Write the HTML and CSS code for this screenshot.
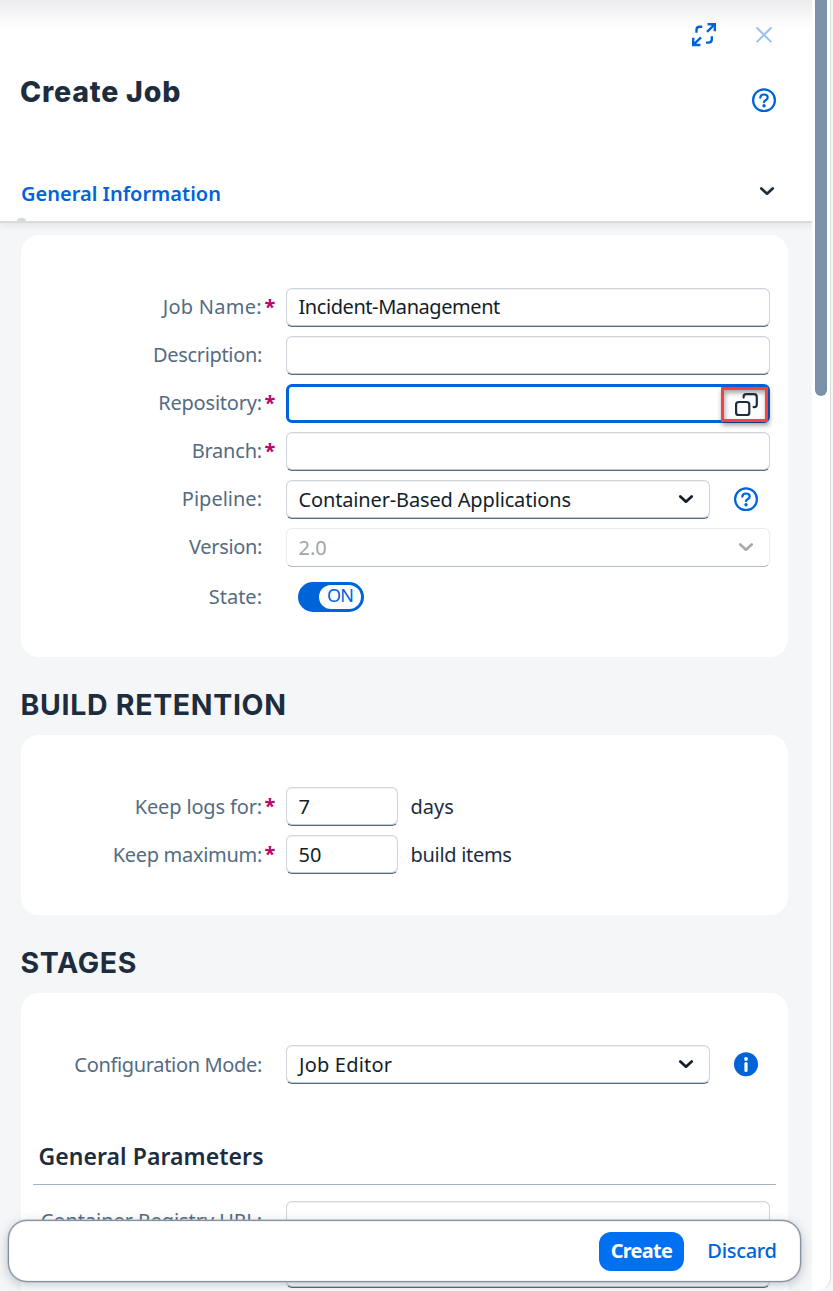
FILE: index.html
```html
<!DOCTYPE html>
<html lang="en">
<head>
<meta charset="utf-8">
<title>Create Job</title>
<link rel="stylesheet" href="styles.css">
</head>
<body>
<svg class="defs" width="0" height="0">
  <symbol id="chevron" viewBox="0 0 16 10"><path d="M2.300 2.400 8 7.700l5.700-5.300" fill="none" stroke="currentColor" stroke-width="2.700" stroke-linecap="round" stroke-linejoin="round"/></symbol>
  <symbol id="help" viewBox="0 0 24 24"><circle cx="12" cy="12.300" r="10.900" fill="none" stroke="currentColor" stroke-width="2.200"/><path d="M8.300 9.600C8.500 7.500 10 6.500 12 6.500c2.200 0 3.700 1.300 3.700 3.100 0 2.700-3.500 2.400-3.700 4.500" fill="none" stroke="currentColor" stroke-width="2.200" stroke-linecap="round"/><circle cx="12" cy="17.700" r="1.700" fill="currentColor"/></symbol>
</svg>
<div class="window">
  <main class="panel">
    <header class="head">
      <div class="tools">
        <svg class="expand" width="26" height="26" viewBox="0 0 26 26" fill="none" stroke="currentColor" stroke-width="2.400"><path d="M16.600 2.200h7.200v7M23.500 2.500 16 9.800M2.200 15.800v7.200h7.200M2.500 22.700 10 15.400"/><path d="M11.200 4.800H8.700Q5.500 4.800 5.500 7.800v3M15 20.600h2.600q3.200 0 3.200-3v-3.300" stroke-linejoin="round"/></svg>
        <svg class="close" width="16" height="16" viewBox="0 0 16 16"><path d="M1.200 1 14.800 14.600M14.800 1 1.200 14.600" stroke="currentColor" stroke-width="2" stroke-linecap="round"/></svg>
      </div>
      <div class="title-row">
        <h1 class="title">Create Job</h1>
        <svg class="help" width="24" height="24"><use href="#help"/></svg>
      </div>
      <div class="nav-row">
        <span class="tab">General Information</span>
        <svg class="chev" width="16" height="10"><use href="#chevron"/></svg>
      </div>
      <i class="tab-mark"></i>
    </header>
    <section class="card card-general">
      <div class="row"><label class="label l-job">Job Name:</label><b class="req">*</b><div class="field v-job">Incident-Management</div></div>
      <div class="row"><label class="label l-desc">Description:</label><b class="req"></b><div class="field"></div></div>
      <div class="row"><label class="label l-repo">Repository:</label><b class="req">*</b><div class="field focus">
        <span class="mark"><svg width="23" height="23" viewBox="0 0 23 23" fill="none" stroke="currentColor" stroke-width="2.200"><rect x="1.100" y="9" width="13.200" height="13" rx="2.600"/><path d="M8.600 4.600V3.800Q8.600 1.200 11.200 1.200H19Q21.800 1.200 21.800 4v7.500q0 2.600-2.600 2.600h-.6" stroke-linecap="round"/></svg></span>
      </div></div>
      <div class="row"><label class="label l-repo">Branch:</label><b class="req">*</b><div class="field"></div></div>
      <div class="row"><label class="label">Pipeline:</label><b class="req"></b><div class="field select mid v-pipe">Container-Based Applications<svg class="chev" width="16" height="10"><use href="#chevron"/></svg></div><svg class="side" width="24" height="24"><use href="#help"/></svg></div>
      <div class="row"><label class="label l-desc">Version:</label><b class="req"></b><div class="field select disabled">2.0<svg class="chev" width="16" height="10"><use href="#chevron"/></svg></div></div>
      <div class="row state"><label class="label">State:</label><b class="req"></b><div class="switch"><span class="knob">ON</span></div></div>
    </section>
    <h2 class="section h-build">BUILD RETENTION</h2>
    <section class="card card-build">
      <div class="row"><label class="label l-logs">Keep logs for:</label><b class="req">*</b><div class="field small">7</div><span class="unit">days</span></div>
      <div class="row"><label class="label l-max">Keep maximum:</label><b class="req">*</b><div class="field small">50</div><span class="unit u-items">build items</span></div>
    </section>
    <h2 class="section h-stages">STAGES</h2>
    <section class="card card-stages">
      <div class="row"><label class="label l-desc">Configuration Mode:</label><b class="req"></b><div class="field select mid v-editor">Job Editor<svg class="chev" width="16" height="10"><use href="#chevron"/></svg></div>
        <svg class="side" width="24" height="24" viewBox="0 0 24 24"><circle cx="12" cy="12.300" r="12" fill="currentColor"/><circle cx="12" cy="7" r="1.900" fill="#fff"/><path d="M12 11.600v6.800" stroke="#fff" stroke-width="3.200" stroke-linecap="round"/></svg></div>
      <h3 class="subhead">General Parameters</h3>
      <div class="row"><label class="label l-url">Container Registry URL:</label><b class="req"></b><div class="field"></div></div>
      <div class="row"><label class="label"></label><b class="req"></b><div class="field"></div></div>
    </section>
  </main>
  <div class="track"><div class="thumb"></div></div>
  <footer class="footer">
    <button class="btn primary">Create</button>
    <button class="btn ghost">Discard</button>
  </footer>
</div>
</body>
</html>
```
FILE: styles.css
```css
* { box-sizing: border-box; }
body { margin: 0; background: #f7f7f7; font-family: "Noto Sans", sans-serif; font-size: 20px; color: #1d2d3e; overflow: hidden; }
h1, h2, h3 { margin: 0; white-space: nowrap; }
.defs { position: absolute; }
.window { position: relative; width: 831px; height: 1291px; display: flex; overflow: hidden; background: #fff; border-right: 1px solid #d9d9d9; border-bottom-right-radius: 14px; }
.panel { width: 812px; height: 1291px; overflow: hidden; background: #f5f6f7; flex: none; }
.track { width: 18px; padding-left: 3px; }
.thumb { width: 12px; height: 396px; background: #7b91a8; border-radius: 0 0 6px 6px; }

.head { position: relative; height: 223px; padding: 0 37px 0 21px; background: linear-gradient(#ededef, #fff 30px); border-bottom: 2px solid #d9dadb; box-shadow: 0 2px 8px rgba(34, 53, 72, .1); }
.tools { display: flex; justify-content: flex-end; align-items: center; height: 69px; gap: 39px; padding-right: 3px; color: #0064d9; }
.close { color: #99c1f0; }
.title-row { display: flex; justify-content: space-between; height: 70px; }
.title { font-family: Inter, sans-serif; font-size: 28.500px; line-height: 45px; font-weight: 850; letter-spacing: .8px; margin-left: -1px; }
.help { color: #0064d9; margin: 19px -1px 0 0; overflow: visible; }
.nav-row { display: flex; justify-content: space-between; padding-top: 41px; }
.tab { color: #0064d9; font-weight: 600; line-height: 28px; }
.nav-row .chev { margin: 6px 0 0; }
.tab-mark { position: absolute; left: 17px; bottom: 0; width: 9px; height: 3px; border-radius: 3px 3px 0 0; background: #d9dadb; }

.card { width: 767px; margin-left: 21px; background: #fff; border-radius: 18px; padding-left: 12px; }
.card-general { margin-top: 12px; height: 422px; padding-top: 53px; }
.card-build { height: 180px; padding-top: 52px; }
.card-stages { height: 340px; padding-top: 52px; }
.row { display: flex; height: 48px; }
.label { width: 229px; line-height: 38px; color: #556b82; white-space: nowrap; display: flex; justify-content: flex-end; }
.card-build .label, .card-stages .label { line-height: 40px; }
.l-job { letter-spacing: .28px; }
.l-desc { letter-spacing: -.34px; }
.l-repo { letter-spacing: -.2px; }
.l-logs { letter-spacing: -.15px; }
.l-max { letter-spacing: -.3px; }
.l-url { letter-spacing: -.05px; }
.req { width: 24px; padding-left: 2.500px; font-size: 20px; line-height: 37px; color: #ba066c; }
.field { width: 484px; height: 39px; padding-left: 11.500px; line-height: 38px; border: 1px solid #d0d6db; border-bottom: 1.500px solid #556b82; border-radius: 6px; background: #fff; color: #131e29; white-space: nowrap; display: flex; box-shadow: inset 0 -1px #c3cbd3, inset 0 1px #eef0f2; }
.v-job { line-height: 36px; letter-spacing: -.43px; }
.v-pipe { letter-spacing: -.15px; }
.v-editor { letter-spacing: .2px; padding-left: 12px; }
.focus { border: 3px solid #0064d9; padding: 0; position: relative; box-shadow: none; }
.mark { position: absolute; left: 432px; top: 0; width: 47px; height: 35px; border: 3px solid #fa3e44; box-shadow: 1px 3px 5px rgba(0, 0, 0, .4), inset 1px 3px 5px rgba(0, 0, 0, .35); padding: 2.500px 0 0 10.500px; line-height: 0; color: #1d2d3e; }
.select { justify-content: space-between; padding-right: 15px; }
.select .chev { margin-top: 13px; }
.mid { width: 424px; }
.side { margin: 7px 0 0 24px; color: #0064d9; overflow: visible; }
.disabled { color: #a0a4a9; border-color: #e9ecee; border-bottom-color: #b3bdc7; box-shadow: none; }
.disabled .chev { color: #a5abb2; }
.state { height: 38px; padding-top: 2px; }
.switch { margin: 4px 0 0 12px; width: 66px; height: 30px; border-radius: 15px; background: #0064d9; padding: 3px; display: flex; justify-content: flex-end; }
.knob { width: 42px; height: 24px; border-radius: 12px; background: #fff; color: #0064d9; font-size: 18px; line-height: 21px; text-align: center; letter-spacing: -.8px; }
.small { width: 112px; }
.unit { margin-left: 12.500px; line-height: 40px; white-space: nowrap; }
.u-items { letter-spacing: -.3px; }
.section { margin-left: 20.500px; height: 78px; padding-top: 25px; font-family: Inter, sans-serif; font-size: 28.500px; line-height: 45px; font-weight: 650; letter-spacing: .68px; }
.subhead { width: 743px; height: 92px; margin-bottom: 16px; padding: 47px 0 0 5.500px; border-bottom: 1px solid #a8b3be; font-size: 23px; line-height: 32px; font-weight: 600; letter-spacing: .06px; }

.footer { position: absolute; left: 8px; top: 1220px; width: 793px; height: 62px; display: flex; align-items: center; padding: 0 0 0 590px; background: #fff; border: 1px solid #84919e; border-radius: 19px; box-shadow: 0 0 0 .500px #a5afb9, inset 0 0 1px #84919e, 0 3px 12px rgba(34, 53, 72, .28); }
.btn { height: 39px; border: 0; padding: 0; font: 600 20px/38px "Noto Sans", sans-serif; border-radius: 12px; white-space: nowrap; }
.primary { width: 85px; background: #0070f2; color: #fff; font-weight: 700; letter-spacing: -.7px; }
.ghost { width: 116px; background: none; color: #0064d9; font-weight: 500; letter-spacing: -.3px; }
```
